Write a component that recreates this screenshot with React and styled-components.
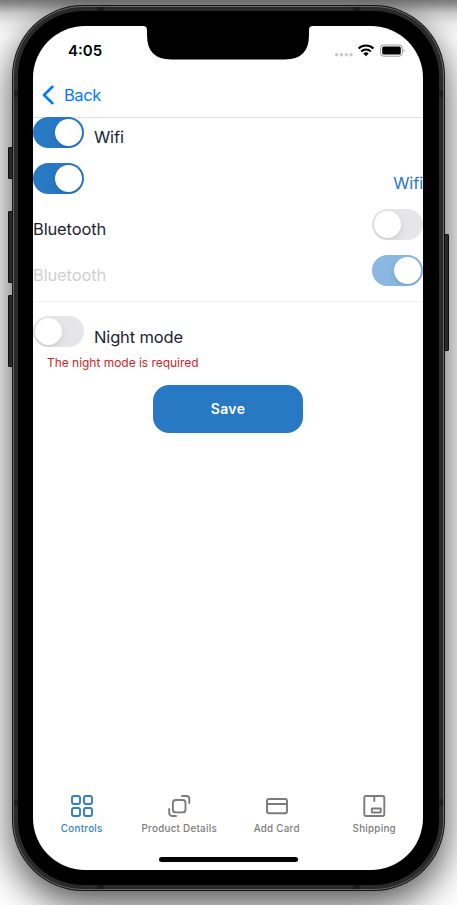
import React from 'react';
import styled, { createGlobalStyle, css } from 'styled-components';

const GlobalStyle = createGlobalStyle`
  * { box-sizing: border-box; }
  body { margin: 0; overflow: hidden; background: #fff; font-family: Inter, "Liberation Sans", sans-serif; }
`;

const Stage = styled.main`
  position: relative;
  width: 457px;
  height: 905px;
  padding: 5px 12px 0 12px;
  overflow: hidden;
  background:
    linear-gradient(to bottom, rgba(0, 0, 0, 0.52) 0, rgba(0, 0, 0, 0.42) 5px, rgba(0, 0, 0, 0.2) 13px, rgba(0, 0, 0, 0.06) 24px, rgba(0, 0, 0, 0) 36px),
    #fff;
`;

const Phone = styled.div`
  position: relative;
  width: 433px;
  height: 886px;
  padding: 1px;
  border-radius: 71px;
  background: #151515;
  box-shadow: 0 13px 38px rgba(0, 0, 0, 0.7);
`;

const Band = styled.div`
  height: 100%;
  padding: 4px;
  border: 1px solid #666;
  border-radius: 70px;
  background: #2a2a2a;
`;

const Bezel = styled.div`
  height: 100%;
  padding: 15px;
  border-radius: 65px;
  background: #000;
`;

const Antenna = styled.span`
  position: absolute;
  width: ${(p) => (p.$tall ? 4 : 7)}px;
  height: ${(p) => (p.$tall ? 7 : 4)}px;
  background: #1c1c1c;
  ${(p) => p.$edge}: 2px;
  ${(p) => (p.$tall ? 'top' : 'left')}: ${(p) => p.$at}px;
`;

const Screen = styled.div`
  display: flex;
  flex-direction: column;
  height: 844px;
  width: 390px;
  border-radius: 52px;
  overflow: hidden;
  background: #fff;
`;

const SideButton = styled.span`
  position: absolute;
  width: 5px;
  top: ${(p) => p.$top}px;
  height: ${(p) => p.$height}px;
  ${(p) => (p.$right ? css`right: -4px;` : css`left: -4px;`)}
  border: 1px solid #101010;
  border-radius: 1px;
  background: #292929;
`;

const StatusBar = styled.header`
  position: relative;
  display: flex;
  justify-content: space-between;
  height: 47px;
  padding: 16px 18px 0 35px;
`;

const Notch = styled.svg`
  position: absolute;
  left: 109px;
  top: -1px;
`;

const Time = styled.time`
  font-size: 15px;
  line-height: 18px;
  font-weight: 600;
  letter-spacing: 0;
  color: #000;
`;

const NavBar = styled.nav`
  display: flex;
  align-items: center;
  gap: 9px;
  height: 45px;
  flex: none;
  padding-left: 9px;
  border-bottom: 1px solid #dedede;
  color: #007aff;
`;

const BackLabel = styled.span`
  font-size: 16.5px;
  line-height: 22px;
  letter-spacing: -0.45px;
`;

const Row = styled.div`
  display: flex;
  justify-content: ${(p) => (p.$spread ? 'space-between' : 'flex-start')};
  gap: 10px;
  height: 31px;
  margin-bottom: 15px;
`;

const Label = styled.span`
  padding: ${(p) => (p.$low ? 10 : 9)}px ${(p) => (p.$flush ? 0 : 1)}px 0 0;
  font-size: 16.5px;
  line-height: 22px;
  letter-spacing: -0.15px;
  color: ${(p) => p.$color || '#1b2531'};
`;

const Track = styled.span`
  display: flex;
  flex: none;
  justify-content: ${(p) => (p.$on ? 'flex-end' : 'flex-start')};
  width: 51px;
  height: 31px;
  padding: 2px;
  border-radius: 16px;
  overflow: hidden;
  background: ${(p) => (p.$disabled ? '#8ab8e0' : p.$on ? '#2879c4' : '#e6e6e8')};
`;

const Knob = styled.span`
  width: 27px;
  height: 27px;
  border-radius: 50%;
  background: #fff;
  box-shadow: 0 3px 7px rgba(0, 0, 0, 0.1), 0 1px 1px rgba(0, 0, 0, 0.04);
`;

const Content = styled.section`
  display: flex;
  flex-direction: column;
  flex: 1;
  margin-top: -1px;
`;

const Divider = styled.hr`
  width: 100%;
  height: 1px;
  margin: 0 0 14px;
  border: 0;
  background: #f3f3f3;
`;

const ErrorText = styled.p`
  margin: -7px 0 0 14px;
  font-size: 12px;
  line-height: 16px;
  letter-spacing: -0.03px;
  color: #c9282d;
`;

const SaveButton = styled.button`
  align-self: center;
  width: 150px;
  height: 48px;
  margin-top: 14px;
  padding: 0;
  border: 0;
  border-radius: 16px;
  background: #2879c4;
  color: #fff;
  font: 600 14px/20px Inter, sans-serif;
  letter-spacing: 0.4px;
`;

const TabBar = styled.nav`
  display: grid;
  grid-template-columns: repeat(4, 1fr);
  height: 63px;
`;

const Tab = styled.div`
  display: flex;
  flex-direction: column;
  align-items: center;
  gap: 4px;
  font-size: 9.8px;
  line-height: 14px;
  font-weight: 550;
  letter-spacing: 0.27px;
  white-space: nowrap;
  color: ${(p) => (p.$active ? '#2f7fc8' : '#7b7b7b')};
`;

const HomeBar = styled.div`
  align-self: center;
  width: 139px;
  height: 5px;
  margin: 0 0 8px;
  border-radius: 3px;
  background: #000;
`;

function Switch({ on, disabled }) {
  return (
    <Track $on={on} $disabled={disabled}>
      <Knob />
    </Track>
  );
}

function TabIcon({ children }) {
  return (
    <svg width="24" height="24" viewBox="0 0 24 24" fill="none" stroke="currentColor" strokeWidth="1.9" strokeLinecap="round" strokeLinejoin="round">
      {children}
    </svg>
  );
}

const tabs = [
  {
    label: 'Controls',
    icon: (
      <>
        <rect x="2" y="2" width="8" height="8" rx="2" />
        <rect x="14" y="2" width="8" height="8" rx="2" />
        <rect x="2" y="14" width="8" height="8" rx="2" />
        <rect x="14" y="14" width="8" height="8" rx="2" />
      </>
    ),
  },
  {
    label: 'Product Details',
    icon: (
      <>
        <rect x="5.9" y="6" width="12.6" height="12.4" rx="3" />
        <path d="M15 2h4.5A2.8 2.8 0 0 1 22.300 4.800V9M9 22H5A2.800 2.800 0 0 1 2.200 19.200V15" />
      </>
    ),
  },
  {
    label: 'Add Card',
    icon: (
      <>
        <rect x="2" y="5" width="20" height="14.3" rx="2" />
        <path d="M2 10h20" />
      </>
    ),
  },
  {
    label: 'Shipping',
    icon: (
      <>
        <rect x="2.3" y="2" width="20" height="20" rx="1.5" />
        <path d="M12.3 2v5" />
        <rect x="9.8" y="14.5" width="9" height="4" rx="0.5" />
      </>
    ),
  },
];

export default function App() {
  return (
    <>
      <GlobalStyle />
      <Stage>
        <Phone>
          <SideButton $top={142} $height={32} />
          <SideButton $top={206} $height={72} />
          <SideButton $top={290} $height={72} />
          <SideButton $top={229} $height={117} $right />
          <Band>
            <Bezel>
              <Screen>
                <StatusBar>
                  <Notch width="172" height="35" viewBox="0 0 172 35">
                    <path d="M0 0H172V1C168 1 167 2 167 6V10Q167 34.5 143 34.5H29Q5 34.5 5 10V6C5 2 4 1 0 1Z" />
                  </Notch>
                  <Time>4:05</Time>
                  <svg width="70" height="18" viewBox="0 0 70 18">
                    <g fill="#c7c7c7">
                      <circle cx="1.7" cy="12.7" r="1.7" />
                      <circle cx="6.5" cy="12.7" r="1.7" />
                      <circle cx="11.3" cy="12.7" r="1.7" />
                      <circle cx="16" cy="12.7" r="1.7" />
                    </g>
                    <g fill="none" stroke="#000" strokeWidth="2.1">
                      <path d="M23.6 6.5a10.6 10.6 0 0 1 14.8 0M26.2 9.4a7 7 0 0 1 9.6 0" />
                    </g>
                    <path d="M28.3 11.5a4 4 0 0 1 5.4 0L31 14.2Z" />
                    <rect x="45.6" y="3" width="21.7" height="11.2" rx="3" fill="none" stroke="#999" />
                    <rect x="47.2" y="4.6" width="18.6" height="8" rx="1.5" />
                    <path d="M68.5 7a2 2 0 0 1 0 3.6Z" fill="#999" />
                  </svg>
                </StatusBar>
                <NavBar>
                  <svg width="13" height="20" viewBox="0 0 13 20" fill="none" stroke="currentColor" strokeWidth="2.6" strokeLinecap="round" strokeLinejoin="round">
                    <path d="M10.4 1.8 2 10l8.4 8.2" />
                  </svg>
                  <BackLabel>Back</BackLabel>
                </NavBar>
                <Content>
                  <Row>
                    <Switch on />
                    <Label>Wifi</Label>
                  </Row>
                  <Row $spread>
                    <Switch on />
                    <Label $flush $color="#2879c4">Wifi</Label>
                  </Row>
                  <Row $spread>
                    <Label>Bluetooth</Label>
                    <Switch />
                  </Row>
                  <Row $spread>
                    <Label $color="#cfcfcf">Bluetooth</Label>
                    <Switch on disabled />
                  </Row>
                  <Divider />
                  <Row>
                    <Switch />
                    <Label $low>Night mode</Label>
                  </Row>
                  <ErrorText>The night mode is required</ErrorText>
                  <SaveButton>Save</SaveButton>
                </Content>
                <TabBar>
                  {tabs.map((tab, i) => (
                    <Tab key={tab.label} $active={i === 0}>
                      <TabIcon>{tab.icon}</TabIcon>
                      {tab.label}
                    </Tab>
                  ))}
                </TabBar>
                <HomeBar />
              </Screen>
            </Bezel>
          </Band>
          <Antenna $edge="top" $at={85} />
          <Antenna $edge="top" $at={341} />
          <Antenna $edge="bottom" $at={85} />
          <Antenna $edge="bottom" $at={341} />
          <Antenna $tall $edge="left" $at={85} />
          <Antenna $tall $edge="right" $at={85} />
          <Antenna $tall $edge="left" $at={794} />
          <Antenna $tall $edge="right" $at={794} />
        </Phone>
      </Stage>
    </>
  );
}
